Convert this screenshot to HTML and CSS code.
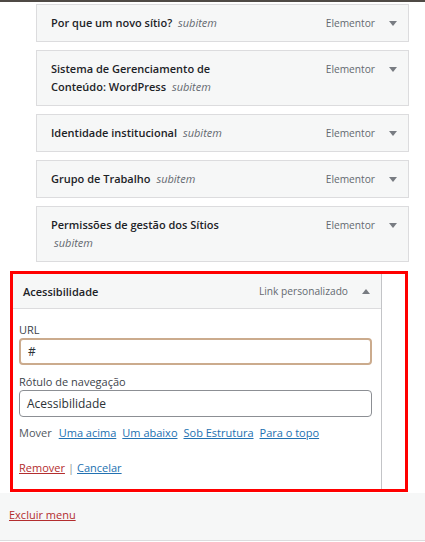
FILE: index.html
```html
<!DOCTYPE html>
<html lang="pt-BR">
<head>
<meta charset="utf-8">
<title>Menu</title>
<link rel="stylesheet" href="styles.css">
</head>
<body>
<div class="topbar"></div>
<div class="menu">
  <div class="item sub">
    <div class="item-title">Por que um novo sítio? <span class="subitem">subitem</span></div>
    <div class="item-controls"><span class="item-type">Elementor</span><span class="arrow down"></span></div>
  </div>
  <div class="item sub">
    <div class="item-title">Sistema de Gerenciamento de Conteúdo: WordPress <span class="subitem">subitem</span></div>
    <div class="item-controls"><span class="item-type">Elementor</span><span class="arrow down"></span></div>
  </div>
  <div class="item sub">
    <div class="item-title">Identidade institucional <span class="subitem">subitem</span></div>
    <div class="item-controls"><span class="item-type">Elementor</span><span class="arrow down"></span></div>
  </div>
  <div class="item sub">
    <div class="item-title">Grupo de Trabalho <span class="subitem">subitem</span></div>
    <div class="item-controls"><span class="item-type">Elementor</span><span class="arrow down"></span></div>
  </div>
  <div class="item sub">
    <div class="item-title">Permissões de gestão dos Sítios <span class="subitem">subitem</span></div>
    <div class="item-controls"><span class="item-type">Elementor</span><span class="arrow down"></span></div>
  </div>
  <div class="highlight">
    <div class="active-item">
      <div class="active-head">
        <div class="active-title">Acessibilidade</div>
        <div class="item-controls"><span class="item-type">Link personalizado</span><span class="arrow up"></span></div>
      </div>
      <div class="active-body">
        <label class="field-label">URL</label>
        <div class="input focused">#</div>
        <label class="field-label second">Rótulo de navegação</label>
        <div class="input">Acessibilidade</div>
        <div class="move-row">
          <span class="move-label">Mover</span>
          <a class="link" href="#">Uma acima</a>
          <a class="link" href="#">Um abaixo</a>
          <a class="link" href="#">Sob Estrutura</a>
          <a class="link" href="#">Para o topo</a>
        </div>
        <div class="actions">
          <a class="link danger" href="#">Remover</a><span class="sep">|</span><a class="link" href="#">Cancelar</a>
        </div>
      </div>
    </div>
  </div>
</div>
<div class="footer">
  <a class="link danger" href="#">Excluir menu</a>
</div>
</body>
</html>
```

FILE: styles.css
```css
* { box-sizing: border-box; }
html, body { margin: 0; padding: 0; background: #fff; }
body {
  font-family: "Open Sans", "Noto Sans", sans-serif;
  font-size: 11px;
  color: #1d2327;
  width: 425px;
  height: 542px;
  overflow: hidden;
}
.topbar { height: 2px; background: #4f4a45; }
.menu {
  display: flex;
  flex-direction: column;
  gap: 8px;
  padding-top: 2px;
}
.item {
  display: flex;
  align-items: flex-start;
  background: #f6f7f7;
  border: 1px solid #dcdcde;
  padding: 9px 11px 9px 14px;
  line-height: 18px;
}
.item.sub { margin: 0 16px 0 36px; }
.item-title {
  width: 200px;
  font-weight: 600;
  font-size: 11px;
  color: #1d2327;
}
.subitem {
  font-style: italic;
  font-weight: 400;
  color: #646970;
  margin-left: 3px;
}
.item-controls {
  margin-left: auto;
  display: flex;
  align-items: center;
  height: 18px;
}
.item-type {
  color: #646970;
  font-size: 10.2px;
  margin-right: 14px;
}
.arrow {
  width: 0;
  height: 0;
  border-left: 4px solid transparent;
  border-right: 4px solid transparent;
}
.arrow.down { border-top: 5px solid #787c82; }
.arrow.up { border-bottom: 5px solid #787c82; }

.highlight {
  margin: 1px 17px 0 10px;
  border: 3px solid #ff0000;
  background: #fff;
}
.active-item {
  width: 369px;
  border-right: 1px solid #c3c4c7;
  background: #fff;
}
.active-head {
  display: flex;
  align-items: center;
  background: #f6f7f7;
  border-bottom: 1px solid #dcdcde;
  height: 35px;
  padding: 0 11px 0 10px;
}
.active-title {
  font-weight: 600;
  font-size: 11px;
  line-height: 18px;
  padding-top: 1px;
}
.active-head .item-controls { height: 18px; }
.active-body {
  padding: 13px 9px 13px 6px;
  display: flex;
  flex-direction: column;
}
.field-label {
  display: block;
  line-height: 16px;
  font-size: 11px;
  color: #3c434a;
}
.field-label.second { margin-top: 9px; }
.input {
  height: 27px;
  border: 1px solid #8c8f94;
  border-radius: 4px;
  padding: 0 7px;
  font-size: 12px;
  line-height: 25px;
  color: #2c3338;
  background: #fff;
}
.input.focused {
  border: 2px solid #cbab8d;
  line-height: 23px;
  padding-left: 7px;
}
.move-row {
  margin-top: 8px;
  line-height: 16px;
  display: flex;
  gap: 6px;
}
.move-label { color: #50575e; margin-right: 1px; }
.link { color: #2271b1; text-decoration: underline; }
.link.danger { color: #b32d2e; }
.actions { margin-top: 19px; line-height: 16px; }
.sep { color: #8c8f94; margin: 0 3px; }
.footer {
  margin-top: 1px;
  background: #f6f7f7;
  border-bottom: 1px solid #dcdcde;
  height: 48px;
  padding: 14px 9px 0;
  line-height: 16px;
}
```
